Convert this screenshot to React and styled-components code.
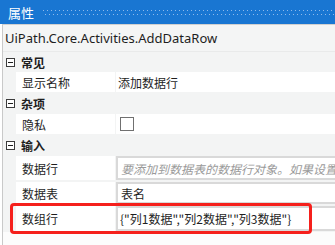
import React from 'react';
import styled, { createGlobalStyle } from 'styled-components';

const GlobalStyle = createGlobalStyle`
  html, body {
    margin: 0;
    padding: 0;
    background: #ffffff;
  }
  body {
    font-family: "Noto Sans", "Noto Sans CJK SC", sans-serif;
    font-size: 12px;
    color: #1e1e1e;
  }
`;

const Panel = styled.div`
  width: 335px;
  height: 245px;
  display: flex;
  flex-direction: column;
  overflow: hidden;
`;

const TitleBar = styled.div`
  height: 24px;
  flex: none;
  display: flex;
  align-items: center;
  background: #1976d2;
  padding-left: 8px;
`;

const Title = styled.span`
  color: #ffffff;
  font-size: 13px;
  font-family: "Noto Sans CJK SC", sans-serif;
  line-height: 1;
`;

const Grip = styled.svg`
  flex: 1;
  height: 6px;
  margin-left: 9px;
  margin-top: 1px;
`;

const Body = styled.div`
  flex: 1;
  display: flex;
  flex-direction: column;
  margin-left: 2px;
  border-left: 1px solid #c9c9c9;
  border-top: 1px solid #d0d0d0;
`;

const TypeName = styled.div`
  height: 26px;
  flex: none;
  display: flex;
  align-items: center;
  padding-left: 2px;
  background: #f4f5f5;
  border-bottom: 1px solid #e9eaea;
  font-size: 13px;
  color: #1e1e1e;
`;

const Grid = styled.div`
  background: #f3f4f4;
  display: flex;
  flex-direction: column;
  padding-bottom: 1px;
`;

const Category = styled.div`
  height: ${p => p.$h || 20}px;
  display: flex;
  align-items: center;
  font-family: "Noto Sans CJK SC", sans-serif;
  font-weight: bold;
  font-size: 12px;
`;

const Toggle = styled.svg`
  width: 9px;
  height: 9px;
  margin: 0 6px 0 3px;
  flex: none;
`;

const Row = styled.div`
  position: relative;
  height: ${p => p.$h || 20}px;
  margin-bottom: ${p => p.$gap ?? 1}px;
  display: flex;
  padding-left: 13px;
`;

const Label = styled.div`
  width: 93px;
  margin-right: 1px;
  padding-left: 6px;
  background: #ffffff;
  display: flex;
  align-items: center;
  font-family: "Noto Sans CJK SC", sans-serif;
`;

const Value = styled.div`
  flex: 1;
  min-width: 0;
  overflow: hidden;
  background: #ffffff;
  display: flex;
  align-items: center;
  padding-left: ${p => (p.$boxed ? 0 : 2)}px;
  font-family: "Noto Sans CJK SC", sans-serif;
`;

const Box = styled.div`
  align-self: stretch;
  flex: 1;
  min-width: 0;
  display: flex;
  align-items: center;
  border: 2px solid #d9d9d9;
  border-right: none;
  padding-left: ${p => p.$pad ?? 3}px;
  white-space: nowrap;
  overflow: hidden;
  color: ${p => (p.$placeholder ? '#9a9a9a' : '#1e1e1e')};
  font-style: ${p => (p.$placeholder ? 'italic' : 'normal')};
`;

const Check = styled.span`
  width: 12px;
  height: 12px;
  margin-left: 2px;
  border: 1px solid #707070;
  background: #ffffff;
`;

const Highlight = styled.div`
  position: absolute;
  left: 7px;
  top: -3px;
  width: 296px;
  bottom: -3px;
  border: 3px solid #f5201c;
  border-radius: 4px;
  pointer-events: none;
`;

const Filler = styled.div`
  flex: 1;
  background: #fcfcfc;
`;

const ToggleIcon = () => (
  <Toggle viewBox="0 0 9 9">
    <rect x="0.5" y="0.5" width="8" height="8" fill="#ffffff" stroke="#3c3c3c" />
    <line x1="2" y1="4.5" x2="7" y2="4.5" stroke="#1e1e1e" />
  </Toggle>
);

const sections = [
  {
    name: '常见',
    rows: [{ label: '显示名称', value: '添加数据行' }],
  },
  {
    name: '杂项',
    rows: [{ label: '隐私', check: true }],
  },
  {
    name: '输入',
    rows: [
      { label: '数据行', box: '要添加到数据表的数据行对象。如果设置', placeholder: true, h: 24, gap: 2 },
      { label: '数据表', box: '表名', h: 22, gap: 2 },
      { label: '数组行', box: '{"列1数据","列2数据","列3数据"}', h: 25, gap: 0, pad: 2, mark: true },
    ],
  },
];

export default function App() {
  return (
    <>
      <GlobalStyle />
      <Panel>
        <TitleBar>
          <Title>属性</Title>
          <Grip>
            <defs>
              <pattern id="dots" width="4" height="6" patternUnits="userSpaceOnUse">
                <rect x="0" y="0" width="1" height="1" fill="#8fb9ea" />
                <rect x="2" y="4" width="1" height="1" fill="#8fb9ea" />
              </pattern>
            </defs>
            <rect width="100%" height="6" fill="url(#dots)" />
          </Grip>
        </TitleBar>
        <Body>
          <TypeName>UiPath.Core.Activities.AddDataRow</TypeName>
          <Grid>
            {sections.map(sec => (
              <React.Fragment key={sec.name}>
                <Category $h={sec.name === '常见' ? 20 : 21}>
                  <ToggleIcon />
                  {sec.name}
                </Category>
                {sec.rows.map(r => (
                  <Row key={r.label} $h={r.h} $gap={r.gap}>
                    <Label>{r.label}</Label>
                    <Value $boxed={!!r.box}>
                      {r.value}
                      {r.check && <Check />}
                      {r.box && (
                        <Box $placeholder={r.placeholder} $pad={r.pad}>{r.box}</Box>
                      )}
                    </Value>
                    {r.mark && <Highlight />}
                  </Row>
                ))}
              </React.Fragment>
            ))}
          </Grid>
          <Filler />
        </Body>
      </Panel>
    </>
  );
}
